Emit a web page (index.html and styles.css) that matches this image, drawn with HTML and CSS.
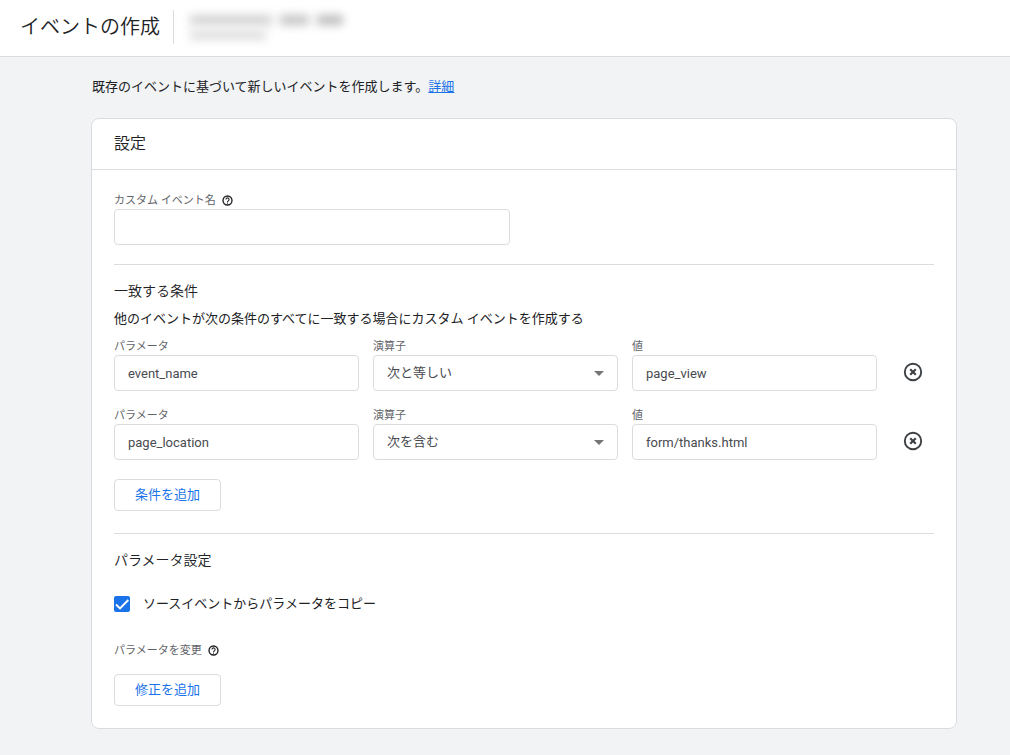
FILE: index.html
```html
<!DOCTYPE html>
<html lang="ja">
<head>
<meta charset="utf-8">
<meta name="viewport" content="width=device-width, initial-scale=1">
<title>イベントの作成</title>
<link rel="stylesheet" href="styles.css">
</head>
<body>
<svg class="sprite" aria-hidden="true">
  <symbol id="help" viewBox="0 0 24 24"><circle cx="12" cy="12" r="9.8" fill="none" stroke="currentColor" stroke-width="3"/><path d="M8.6 9.8a3.4 3.4 0 1 1 5.6 2.6c-1.3 1-2.2 1.4-2.2 3" fill="none" stroke="currentColor" stroke-width="2.4"/><path d="M10.8 16.4h2.4v2.4h-2.4z" fill="currentColor"/></symbol>
  <symbol id="remove" viewBox="0 0 20 20"><circle cx="10" cy="10" r="8.2" fill="none" stroke="currentColor" stroke-width="1.9"/><path d="M7.2 7.2l5.6 5.6M12.8 7.2l-5.6 5.6" fill="none" stroke="currentColor" stroke-width="2.1"/></symbol>
  <symbol id="arrow" viewBox="0 0 10 5"><path d="M0 0h10L5 5z" fill="currentColor"/></symbol>
</svg>
<header class="topbar">
  <h1 class="page-title">イベントの作成</h1>
  <div class="account" aria-hidden="true">
    <div class="account-line"><span class="smudge smudge-name"></span><span class="smudge smudge-word"></span><span class="smudge smudge-end"></span></div>
    <div class="account-line"><span class="smudge smudge-id"></span></div>
  </div>
</header>
<main class="content">
  <p class="intro">既存のイベントに基づいて新しいイベントを作成します。<a class="link" href="#">詳細</a></p>
  <form class="card">
    <h2 class="card-title">設定</h2>
    <div class="card-body">
      <section class="section">
        <div class="label-row"><label class="label" for="event-name">カスタム イベント名</label><svg class="help"><use href="#help"/></svg></div>
        <input class="control name-control" id="event-name" type="text">
      </section>
      <section class="section conditions">
        <h3 class="section-title">一致する条件</h3>
        <p class="description">他のイベントが次の条件のすべてに一致する場合にカスタム イベントを作成する</p>
        <div class="rows">
          <div class="condition">
            <div class="field"><label class="label" for="param-1">パラメータ</label><input class="control" id="param-1" type="text" value="event_name"></div>
            <div class="field"><label class="label" for="op-1">演算子</label><div class="select-box"><select class="control" id="op-1"><option>次と等しい</option><option>次を含む</option></select><svg class="arrow"><use href="#arrow"/></svg></div></div>
            <div class="field"><label class="label" for="value-1">値</label><input class="control" id="value-1" type="text" value="page_view"></div>
            <button class="remove" type="button" aria-label="削除"><svg class="remove-icon"><use href="#remove"/></svg></button>
          </div>
          <div class="condition">
            <div class="field"><label class="label" for="param-2">パラメータ</label><input class="control" id="param-2" type="text" value="page_location"></div>
            <div class="field"><label class="label" for="op-2">演算子</label><div class="select-box"><select class="control" id="op-2"><option>次を含む</option><option>次と等しい</option></select><svg class="arrow"><use href="#arrow"/></svg></div></div>
            <div class="field"><label class="label" for="value-2">値</label><input class="control" id="value-2" type="text" value="form/thanks.html"></div>
            <button class="remove" type="button" aria-label="削除"><svg class="remove-icon"><use href="#remove"/></svg></button>
          </div>
        </div>
        <button class="add" type="button">条件を追加</button>
      </section>
      <section class="section parameters">
        <h3 class="section-title">パラメータ設定</h3>
        <div class="check-row"><input class="check" id="copy" type="checkbox" checked><label for="copy">ソースイベントからパラメータをコピー</label></div>
        <div class="label-row"><span class="label">パラメータを変更</span><svg class="help"><use href="#help"/></svg></div>
        <button class="add" type="button">修正を追加</button>
      </section>
    </div>
  </form>
</main>
</body>
</html>
```
FILE: styles.css
```css
* { box-sizing: border-box; }

body {
  margin: 0;
  min-height: 100vh;
  background: #f1f3f4;
  color: #202124;
  font: 400 13px/20px Roboto, "Noto Sans CJK JP", sans-serif;
}

h1, h2, h3, p { margin: 0; font-weight: 350; }
button, input, select { font: inherit; }

.sprite { position: absolute; width: 0; height: 0; }

.topbar {
  display: flex;
  align-items: center;
  height: 57px;
  padding: 0 20px 2px;
  background: #fff;
  border-bottom: 1px solid #dadce0;
}

.page-title {
  padding-right: 13px;
  border-right: 1px solid #dadce0;
  font-size: 20px;
  line-height: 34px;
}

.account {
  display: grid;
  gap: 5px;
  padding-left: 16px;
}

.account-line { display: flex; gap: 8px; }

.smudge {
  height: 10px;
  background: #d2d2d2;
  filter: blur(5px);
}

.smudge-name { width: 82px; }
.smudge-word { width: 29px; background: #c4c4c4; }
.smudge-end { width: 26px; background: #bcbcbc; }
.smudge-id { width: 76px; background: #e0e0e0; }

.content { padding: 20px 53px 26px 91px; }
.intro { padding-left: 1px; font-weight: 400; }
.link { color: #1a73e8; }

.card {
  margin-top: 21px;
  background: #fff;
  border: 1px solid #dadce0;
  border-radius: 8px;
}

.card-title {
  padding: 13px 22px;
  border-bottom: 1px solid #dadce0;
  font-size: 16px;
  line-height: 24px;
}

.card-body { padding: 0 22px; }

.section { padding: 23px 0 19px; }
.section + .section { border-top: 1px solid #dadce0; }

.label-row { display: flex; align-items: center; gap: 6px; }

.label {
  display: block;
  color: #5f6368;
  font-size: 11px;
  line-height: 16px;
}

.help { width: 11px; height: 11px; margin-bottom: 2px; color: #202124; }

.control {
  display: block;
  width: 100%;
  height: 36px;
  padding: 0 13px;
  background: #fff;
  border: 1px solid #dadce0;
  border-radius: 4px;
  color: #484b4f;
}

.name-control { max-width: 396px; }
select.control { appearance: none; }

.section.conditions { padding: 14px 0 22px; }

.section-title { font-size: 14px; line-height: 24px; }
.description { margin-top: 6px; font-weight: 400; }

.rows { display: grid; gap: 17px; margin: 10px 0 19px; }

.condition {
  display: grid;
  grid-template-columns: repeat(3, 1fr) 43px;
  gap: 14px;
}

.select-box { position: relative; }

.arrow {
  position: absolute;
  top: 16px;
  right: 14px;
  width: 10px;
  height: 5px;
  color: #757575;
  pointer-events: none;
}

.remove {
  align-self: end;
  display: grid;
  place-items: center;
  height: 36px;
  padding: 0 0 2px;
  background: none;
  border: 0;
  color: #3c4043;
}

.remove-icon { width: 20px; height: 20px; }

.add {
  display: block;
  height: 32px;
  padding: 0 20px;
  background: #fff;
  border: 1px solid #dadce0;
  border-radius: 4px;
  color: #1a73e8;
}

.section.parameters { padding: 14px 0 22px; }

.check-row {
  display: flex;
  align-items: center;
  gap: 13px;
  margin: 22px 0 29px;
}

.check {
  appearance: none;
  width: 16px;
  height: 16px;
  margin: 0;
  border-radius: 2px;
  background: #1a73e8 url("data:image/svg+xml,%3Csvg xmlns='http://www.w3.org/2000/svg' viewBox='0 0 16 16'%3E%3Cpath d='M2 8.5l4 4L14.3 4' fill='none' stroke='white' stroke-width='1.9'/%3E%3C/svg%3E");
}

.parameters .add { margin-top: 15px; }
```
